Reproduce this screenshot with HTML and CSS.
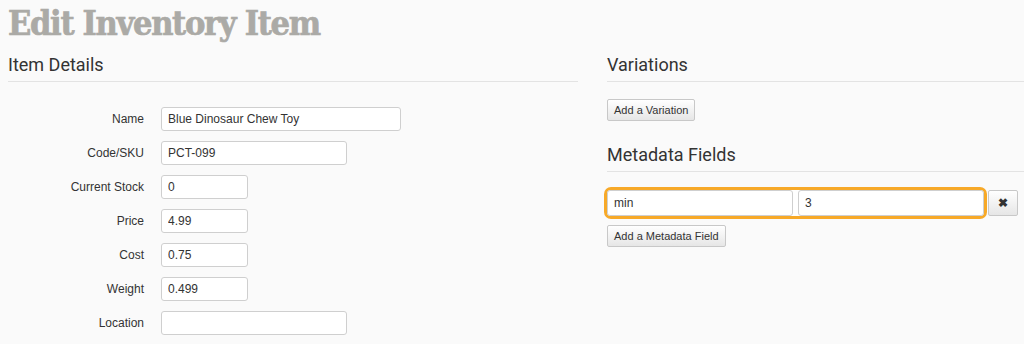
FILE: index.html
```html
<!DOCTYPE html>
<html>
<head>
<title>Edit Inventory Item</title>
<link rel="stylesheet" href="styles.css">
</head>
<body>
<h1 class="page-title">Edit Inventory Item</h1>
<div class="columns">
<div class="column">
<h2 class="section-title">Item Details</h2>
<div class="form-grid">
<label>Name</label>
<input type="text" class="input-wide" value="Blue Dinosaur Chew Toy">
<label>Code/SKU</label>
<input type="text" class="input-mid" value="PCT-099">
<label>Current Stock</label>
<input type="text" class="input-small" value="0">
<label>Price</label>
<input type="text" class="input-small" value="4.99">
<label>Cost</label>
<input type="text" class="input-small" value="0.75">
<label>Weight</label>
<input type="text" class="input-small" value="0.499">
<label>Location</label>
<input type="text" class="input-mid" value="">
</div>
</div>
<div class="column">
<h2 class="section-title">Variations</h2>
<button class="btn btn-variation">Add a Variation</button>
<h2 class="section-title meta-title">Metadata Fields</h2>
<div class="meta-row">
<div class="meta-pair">
<input type="text" value="min">
<input type="text" value="3">
</div>
<button class="btn btn-remove">&#10006;</button>
</div>
<button class="btn">Add a Metadata Field</button>
</div>
</div>
</body>
</html>
```

FILE: styles.css
```css
body{
margin:0;
padding:0 0 0 8px;
background:#fafafa;
color:#333;
font-family:"Liberation Sans",Arial,sans-serif;
}
.page-title{
margin:3px 0 0;
font-family:"DejaVu Serif Condensed","DejaVu Serif",serif;
font-stretch:condensed;
font-weight:bold;
font-size:34px;
line-height:40px;
color:#abaaa6;
letter-spacing:-1.3px;
-webkit-text-stroke:0.7px #abaaa6;
}
.columns{
display:grid;
grid-template-columns:570px 1fr;
column-gap:29px;
}
.section-title{
margin:11px 0 0;
padding-bottom:5px;
border-bottom:1px solid #e3e3e3;
font-family:Roboto,sans-serif;
font-weight:normal;
font-size:18px;
line-height:22px;
color:#333;
}
.meta-title{
margin-top:23px;
}
.form-grid{
display:grid;
grid-template-columns:136px auto;
column-gap:17px;
row-gap:10px;
align-items:center;
justify-items:start;
margin-top:25px;
}
.form-grid label{
justify-self:end;
font-size:12px;
}
input{
box-sizing:border-box;
height:24px;
padding:0 6px;
border:1px solid #cfcfcf;
border-radius:3px;
background:#fff;
font-family:"Liberation Sans",Arial,sans-serif;
font-size:12px;
color:#333;
}
.input-wide{
width:240px;
}
.input-mid{
width:186px;
}
.input-small{
width:87px;
}
.btn{
display:block;
height:22px;
padding:0 6px;
border:1px solid #c8c8c8;
border-radius:2px;
background:linear-gradient(#fff,#e6e6e6);
font-family:"Liberation Sans",Arial,sans-serif;
font-size:11px;
color:#333;
}
.btn-variation{
margin-top:17px;
}
.meta-row{
display:flex;
align-items:center;
gap:4px;
margin-top:18px;
}
.meta-pair{
display:flex;
gap:5px;
border-radius:4px;
background:#fff;
box-shadow:0 0 0 3px #f7a928;
}
.meta-pair input{
width:186px;
height:26px;
}
.btn-remove{
width:30px;
height:26px;
padding:0;
font-size:12px;
font-weight:bold;
}
.meta-row + .btn{
margin-top:9px;
}
```
